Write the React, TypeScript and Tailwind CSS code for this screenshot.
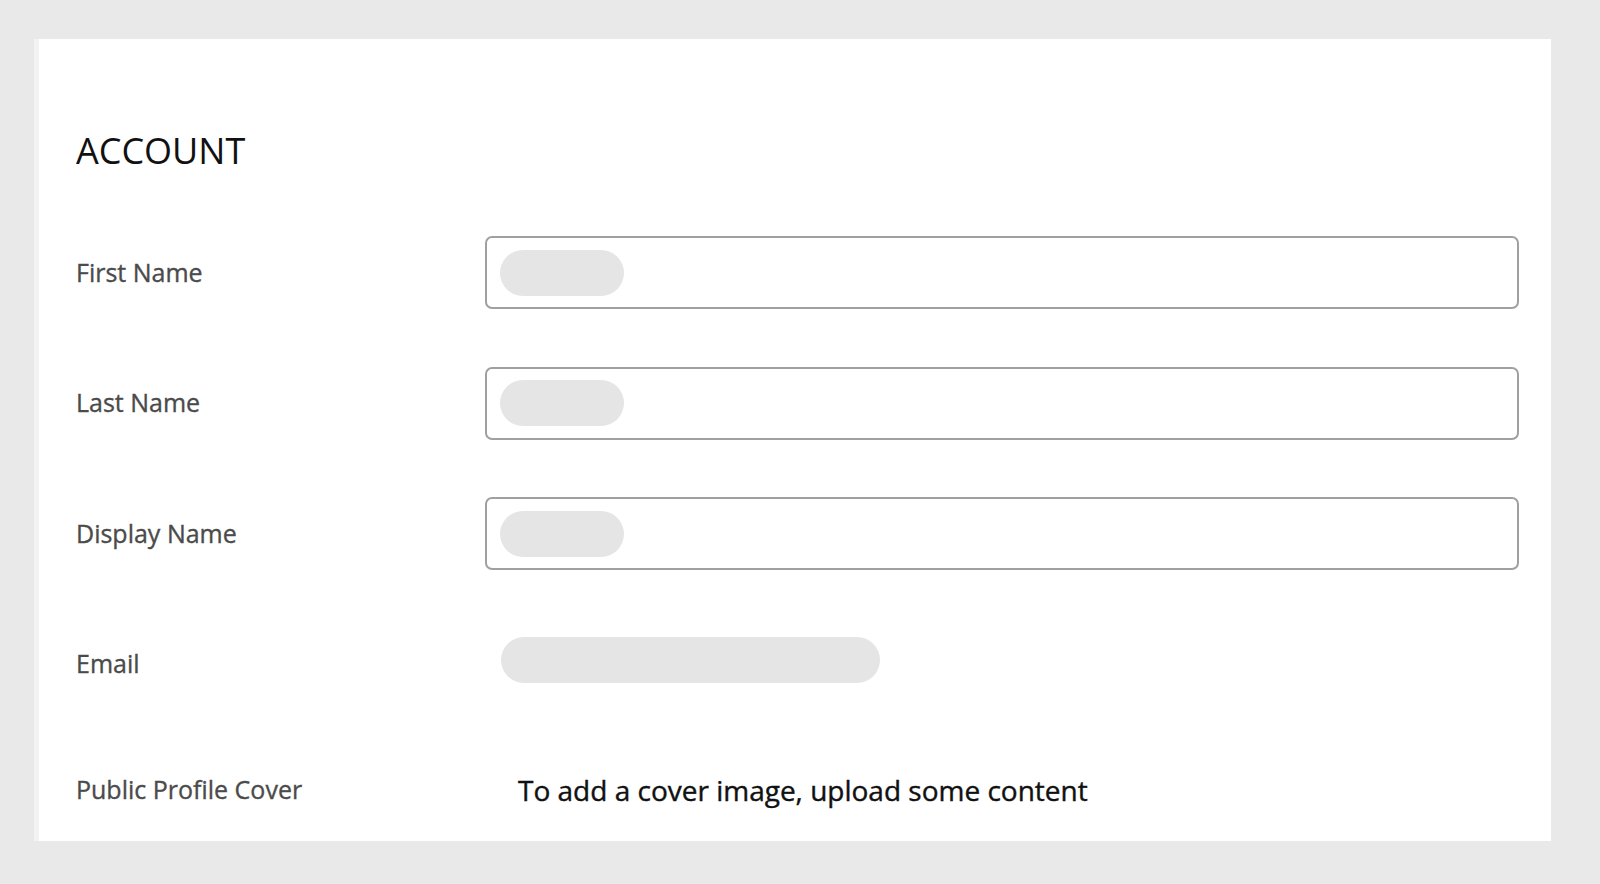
import React from "react";

const font = { fontFamily: '"Open Sans", "Noto Sans", sans-serif' };

function InputRow({ label }: { label: string }) {
  return (
    <div className="flex h-[73px] items-center">
      <div className="w-[409px] text-[25px] text-[#4b4b4b] [-webkit-text-stroke:0.35px_#4b4b4b]">{label}</div>
      <div className="flex h-[73px] w-[1034px] items-center rounded-[7px] border-2 border-[#a0a0a0] bg-white">
        <div className="ml-[13px] h-[46px] w-[124px] rounded-full bg-[#e5e5e5]" />
      </div>
    </div>
  );
}

export default function App() {
  return (
    <div
      className="h-[884px] w-[1600px] overflow-hidden bg-[#e9e9e9] pl-[34px] pt-[39px]"
      style={font}
    >
      <div className="h-[802px] w-[1517px] border-l-[5px] border-[#f3f3f3] bg-white pl-[37px] pt-[88px]">
        <h1 className="text-[36px] leading-[48px] text-[#111]">ACCOUNT</h1>
        <div className="mt-[61px] flex flex-col gap-[57.5px]">
          <InputRow label="First Name" />
          <InputRow label="Last Name" />
          <InputRow label="Display Name" />
          <div className="flex h-[73px] items-center">
            <div className="w-[409px] text-[25px] text-[#4b4b4b] [-webkit-text-stroke:0.35px_#4b4b4b]">Email</div>
            <div className="ml-[16px] mt-[9px] h-[46px] w-[379px] self-start rounded-full bg-[#e5e5e5]" />
          </div>
        </div>
        <div className="mt-[69px] flex h-[40px] items-center">
          <div className="w-[409px] text-[25px] text-[#4b4b4b] [-webkit-text-stroke:0.35px_#4b4b4b]">Public Profile Cover</div>
          <div className="pl-[33px] text-[28px] text-[#111] [-webkit-text-stroke:0.4px_#111]">
            To add a cover image, upload some content
          </div>
        </div>
      </div>
    </div>
  );
}
